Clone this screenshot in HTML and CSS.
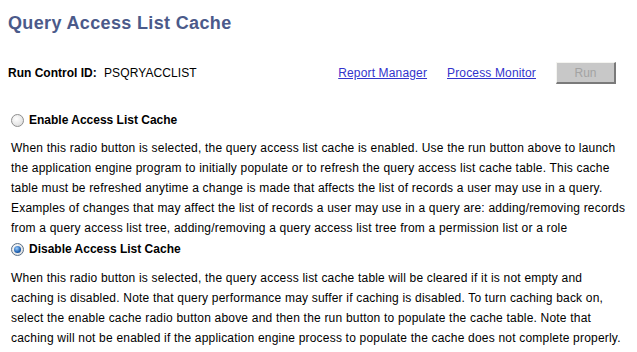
FILE: index.html
```html
<!DOCTYPE html>
<html lang="en">
<head>
  <meta charset="UTF-8" />
  <title>Query Access List Cache</title>
  <link rel="stylesheet" href="styles.css">
</head>
<body>

  <h1 class="page-title">Query Access List Cache</h1>

  <div class="run-bar">
    <span class="run-label">Run Control ID:</span>
    <span class="run-value">PSQRYACCLIST</span>
    <div class="run-links">
      <a href="#">Report Manager</a>
      <a href="#">Process Monitor</a>
      <button class="run-btn" disabled>Run</button>
    </div>
  </div>

  <div class="option">
    <label class="option-label">
      <span class="radio"></span>
      Enable Access List Cache
    </label>
    <p class="option-text">When this radio button is selected, the query access list cache is enabled. Use the run button above to launch the application engine program to initially populate or to refresh the query access list cache table. This cache table must be refreshed anytime a change is made that affects the list of records a user may use in a query. Examples of changes that may affect the list of records a user may use in a query are: adding/removing records from a query access list tree, adding/removing a query access list tree from a permission list or a role</p>
  </div>

  <div class="option">
    <label class="option-label">
      <span class="radio checked"></span>
      Disable Access List Cache
    </label>
    <p class="option-text">When this radio button is selected, the query access list cache table will be cleared if it is not empty and caching is disabled. Note that query performance may suffer if caching is disabled. To turn caching back on, select the enable cache radio button above and then the run button to populate the cache table. Note that caching will not be enabled if the application engine process to populate the cache does not complete properly.</p>
  </div>

</body>
</html>
```

FILE: styles.css
```css
body {
  font-family: 'Liberation Sans', Arial, sans-serif;
  font-size: 12px;
  color: #000;
  background: #fff;
  margin: 0;
  padding: 0 0 0 8px;
}
.page-title {
  font-size: 18px;
  font-weight: bold;
  letter-spacing: 0.35px;
  color: #4b5a8a;
  margin: 0;
  padding-top: 13px;
  line-height: 20px;
}
.run-bar {
  display: flex;
  align-items: center;
  margin-top: 29px;
  width: 608px;
}
.run-label {
  font-weight: bold;
  width: 96px;
}
.run-value {
  letter-spacing: 0.1px;
}
.run-links {
  margin-left: auto;
  display: flex;
  align-items: center;
}
.run-links a {
  color: #3333cc;
  margin-left: 20px;
  letter-spacing: 0.15px;
}
.run-btn {
  margin-left: 20px;
  width: 60px;
  height: 22px;
  font-family: inherit;
  font-size: 12px;
  color: #a3a3a3;
  background: #c8c8c8;
  border: 1px solid;
  border-color: #f4f4f0 #7a7a7a #7a7a7a #f4f4f0;
  border-width: 1px 2px 2px 1px;
  padding: 0;
}
.option {
  padding-left: 3px;
}
.option-label {
  display: flex;
  align-items: center;
  font-weight: bold;
  font-size: 12px;
  margin-top: 29px;
}
.option + .option .option-label {
  margin-top: 4px;
}
.radio {
  width: 11px;
  height: 11px;
  border-radius: 50%;
  border: 1px solid #8e8e8e;
  background: radial-gradient(circle at 40% 35%, #ffffff, #d6d6d6);
  margin-right: 5px;
  position: relative;
}
.radio.checked {
  border-color: #5a6f86;
}
.radio.checked::after {
  content: "";
  position: absolute;
  left: 2px;
  top: 2px;
  width: 7px;
  height: 7px;
  border-radius: 50%;
  background: radial-gradient(circle at 40% 35%, #9fd0ff, #1c5fb0 60%, #0d3c7a);
}
.option-text {
  margin: 11px 0 0 0;
  line-height: 20px;
  letter-spacing: 0.2px;
  width: 618px;
}
.option + .option .option-text {
  margin-top: 12px;
  width: 612px;
}
```
